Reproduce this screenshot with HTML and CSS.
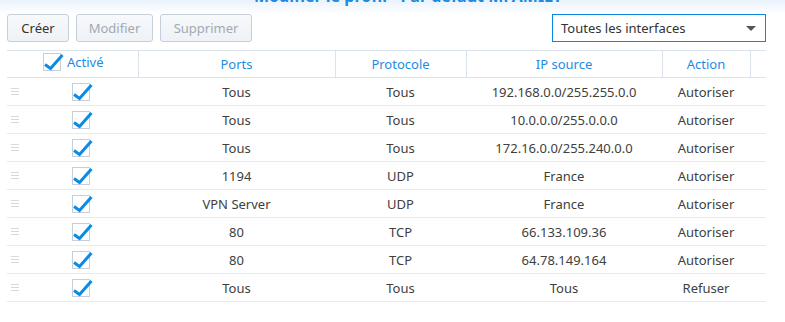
FILE: index.html
```html
<!DOCTYPE html>
<html lang="fr">
<head>
    <meta charset="UTF-8">
    <title>Pare-feu</title>
    <link rel="stylesheet" href="styles.css">
</head>
<body>

<div class="title-bar">
    <div class="title">Modifier le profil - Par défaut MFAMILY</div>
</div>

<div class="toolbar">
    <button class="btn btn-create">Créer</button>
    <button class="btn btn-edit" disabled>Modifier</button>
    <button class="btn btn-delete" disabled>Supprimer</button>
    <div class="select">
        <span>Toutes les interfaces</span>
        <span class="arrow"></span>
    </div>
</div>

<table class="rules">
    <colgroup>
        <col style="width:18px">
        <col style="width:113px">
        <col style="width:197px">
        <col style="width:131px">
        <col style="width:196px">
        <col style="width:88px">
        <col style="width:16px">
    </colgroup>
    <thead>
        <tr>
            <th colspan="2"><span class="head-check"><svg class="check" width="19" height="19" viewBox="0 0 19 19"><rect x="0.5" y="0.5" width="17" height="17" fill="#fff" stroke="#c4cfdb"/><path d="M2 11.5 L7.5 15.5 L19.5 2" fill="none" stroke="#0b8ae6" stroke-width="3"/></svg>Activé</span></th>
            <th>Ports</th>
            <th>Protocole</th>
            <th>IP source</th>
            <th>Action</th>
            <th class="last"></th>
        </tr>
    </thead>
    <tbody id="rows"></tbody>
</table>

<script>
var rules = [
    ["Tous", "Tous", "192.168.0.0/255.255.0.0", "Autoriser"],
    ["Tous", "Tous", "10.0.0.0/255.0.0.0", "Autoriser"],
    ["Tous", "Tous", "172.16.0.0/255.240.0.0", "Autoriser"],
    ["1194", "UDP", "France", "Autoriser"],
    ["VPN Server", "UDP", "France", "Autoriser"],
    ["80", "TCP", "66.133.109.36", "Autoriser"],
    ["80", "TCP", "64.78.149.164", "Autoriser"],
    ["Tous", "Tous", "Tous", "Refuser"]
];

var check = '<svg class="check" width="19" height="19" viewBox="0 0 19 19"><rect x="0.5" y="0.5" width="17" height="17" fill="#fff" stroke="#c4cfdb"/><path d="M2 11.5 L7.5 15.5 L19.5 2" fill="none" stroke="#0b8ae6" stroke-width="3"/></svg>';

var html = "";
for (var i = 0; i < rules.length; i++) {
    var r = rules[i];
    html += '<tr>' +
        '<td><span class="handle"></span></td>' +
        '<td>' + check + '</td>' +
        '<td>' + r[0] + '</td>' +
        '<td>' + r[1] + '</td>' +
        '<td>' + r[2] + '</td>' +
        '<td>' + r[3] + '</td>' +
        '<td></td>' +
        '</tr>';
}
document.getElementById("rows").innerHTML = html;
</script>

</body>
</html>
```

FILE: styles.css
```css
body {
    margin: 0;
    font-family: "Noto Sans", "Liberation Sans", sans-serif;
    font-size: 13px;
    color: #404040;
    background: linear-gradient(#eaf2fb 0, #ffffff 14px) no-repeat;
    overflow: hidden;
}
.title-bar {
    height: 14px;
    overflow: hidden;
}
.title {
    margin-top: -14px;
    padding-left: 254px;
    font-size: 16px;
    font-weight: bold;
    line-height: 20px;
    color: #1a8ae4;
}
.toolbar {
    display: flex;
    align-items: center;
    gap: 7px;
    padding: 0 19px 0 7px;
    height: 28px;
}
.btn {
    height: 28px;
    padding: 0;
    font-family: inherit;
    font-size: 13px;
    color: #333;
    background: linear-gradient(#f7f9fb, #eef2f6);
    border: 1px solid #c6cfd9;
    border-radius: 3px;
}
.btn-create {
    width: 62px;
}
.btn-edit {
    width: 77px;
}
.btn-delete {
    width: 92px;
}
.btn[disabled] {
    color: #a3a9b0;
}
.select {
    margin-left: auto;
    width: 214px;
    height: 28px;
    box-sizing: border-box;
    border: 1px solid #0a86e0;
    display: flex;
    align-items: center;
    justify-content: space-between;
    padding: 0 9px 0 8px;
    color: #333;
}
.arrow {
    width: 0;
    height: 0;
    border-left: 5px solid transparent;
    border-right: 5px solid transparent;
    border-top: 5px solid #555;
}
.rules {
    margin: 8px 0 0 7px;
    width: 759px;
    border-collapse: collapse;
    table-layout: fixed;
}
.rules th {
    height: 26px;
    padding: 0;
    font-weight: normal;
    color: #1f8be2;
    border-top: 1px solid #dbe3ec;
    border-bottom: 1px solid #dbe3ec;
    border-right: 1px solid #dbe3ec;
}
.rules th.last {
    border-right: none;
}
.head-check {
    display: inline-flex;
    align-items: center;
    gap: 5px;
    margin-left: 2px;
}
.rules td {
    height: 27px;
    padding: 0;
    text-align: center;
    border-bottom: 1px solid #e6e9ed;
}
.check {
    display: block;
    overflow: visible;
}
.rules td .check {
    margin: 1px 0 0 47px;
}
.handle {
    display: block;
    width: 8px;
    height: 7px;
    margin-left: 4px;
    background: linear-gradient(#d4d9df 0 1px, transparent 1px 3px, #d4d9df 3px 4px, transparent 4px 6px, #d4d9df 6px 7px);
}
```
